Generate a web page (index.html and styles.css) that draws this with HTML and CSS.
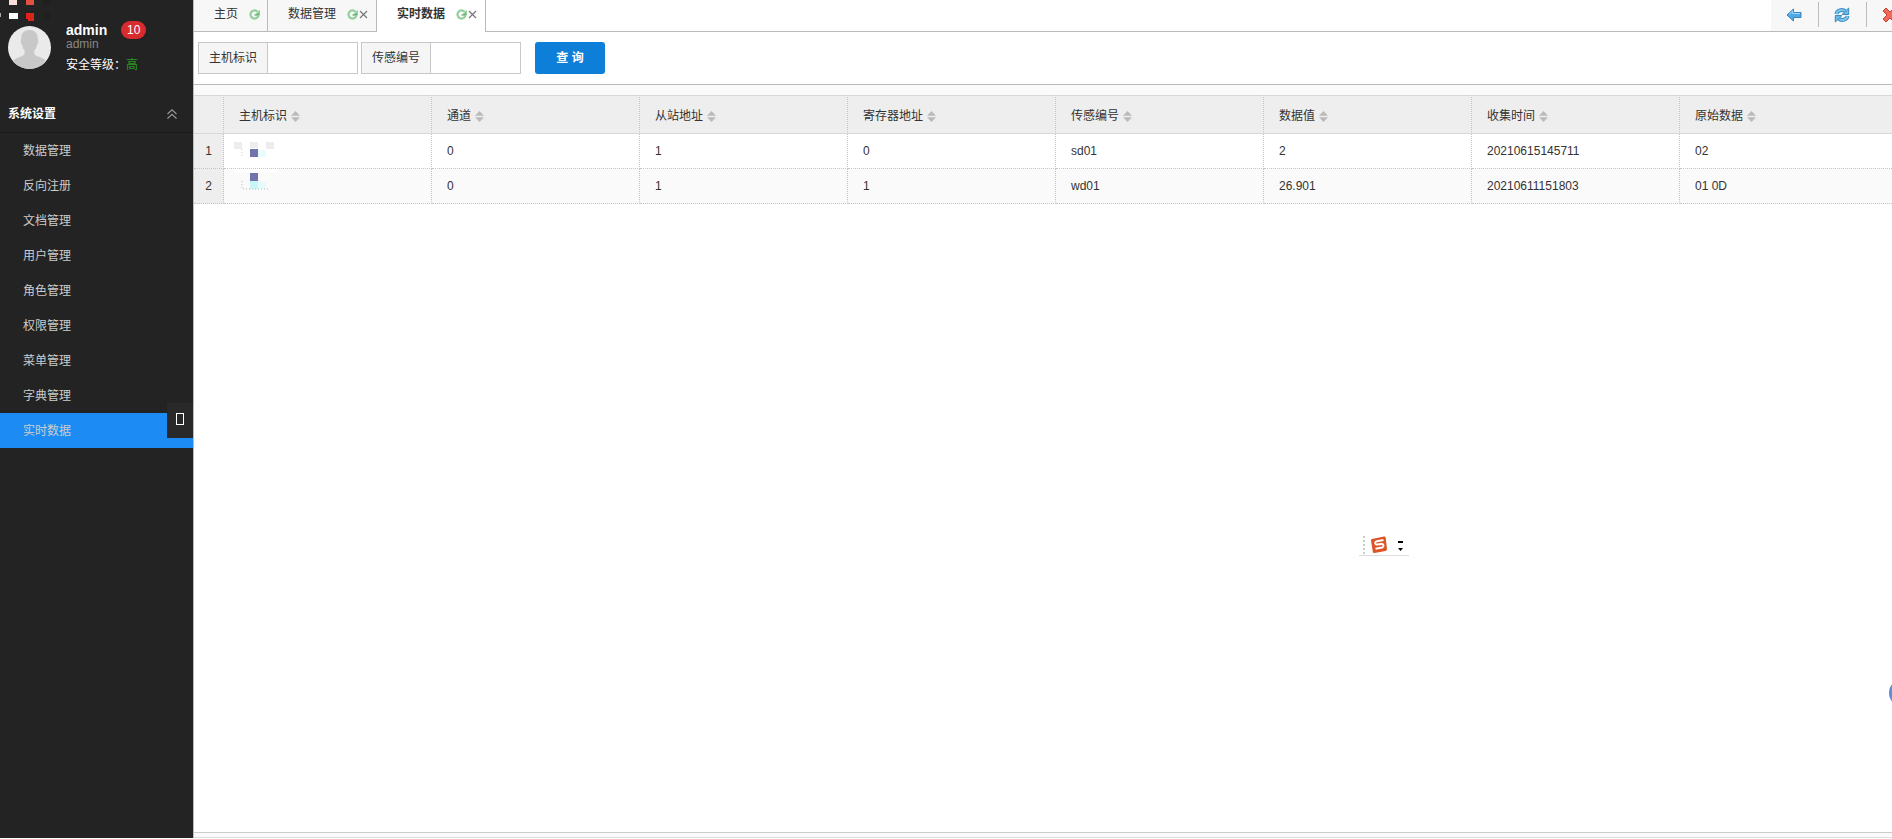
FILE: index.html
```html
<!DOCTYPE html>
<html lang="zh-CN">
<head>
<meta charset="utf-8">
<title>实时数据</title>
<link rel="stylesheet" href="styles.css">
</head>
<body>
<svg class="defs" aria-hidden="true">
  <symbol id="reload" viewBox="0 0 12 12"><path d="M9.300 3A4.400 4.400 0 1 0 10.200 7.500" fill="none" stroke="#93d09c" stroke-width="2.400"/><path d="M11.800.8v5.700H6.500z" fill="#86c990"/><path d="M6 6.500h5.500" stroke="#5fae6e" stroke-width="1.400"/></symbol>
  <symbol id="close" viewBox="0 0 9 9"><path d="M1 1l7 7M8 1L1 8" stroke="#777" stroke-width="1.2"/></symbol>
  <symbol id="sort" viewBox="0 0 10 12"><path d="M5 0l5 5.200H0zM5 12L0 6.800h10z" fill="#bbb"/></symbol>
</svg>
<div class="app">
  <aside class="sidebar">
    <svg class="mosaic" viewBox="0 0 60 22" aria-hidden="true"><path d="M0 13h1v4H0z" fill="#aaa"/><path d="M9 0h8v5H9z" fill="#f5dfdc"/><path d="M26 0h8v5h-8z" fill="#e2503f"/><path d="M9 13h9v6H9z" fill="#fff"/><path d="M26 13h8v8h-6v-2h-2z" fill="#dc241b"/><path d="M43 0h7v5h-7zM43 13h7v6h-7z" fill="#1f1f1f"/></svg>
    <div class="profile">
      <svg class="avatar" viewBox="0 0 44 44" aria-hidden="true"><defs><clipPath id="round"><circle cx="22" cy="22" r="22"/></clipPath></defs><g clip-path="url(#round)"><path d="M0 0h44v44H0z" fill="#eaeaea"/><path d="M22 4c6 0 9 4 8.500 10 1 1 .8 4-.8 5-.5 3-1.500 5-2.700 6v4c3 3 9 3 12 7l2 8H3l2-8c3-4 9-4 12-7v-4c-1.200-1-2.200-3-2.700-6-1.600-1-1.800-4-.8-5C13 8 16 4 22 4z" fill="#c8c8c8"/></g></svg>
      <div class="who">
        <div class="name"><b>admin</b><span class="count">10</span></div>
        <div class="role">admin</div>
        <div class="level">安全等级：<span>高</span></div>
      </div>
    </div>
    <button class="group"><span>系统设置</span><svg width="10" height="10" viewBox="0 0 10 10"><path d="M.5 5L5 .8 9.500 5M.5 9.500L5 5.300l4.500 4.200" fill="none" stroke="#999" stroke-width="1.100"/></svg></button>
    <nav class="menu">
      <a href="#">数据管理</a>
      <a href="#">反向注册</a>
      <a href="#">文档管理</a>
      <a href="#">用户管理</a>
      <a href="#">角色管理</a>
      <a href="#">权限管理</a>
      <a href="#">菜单管理</a>
      <a href="#">字典管理</a>
      <a href="#" class="current">实时数据</a>
    </nav>
    <button class="handle" aria-label="收起菜单"><i></i></button>
  </aside>
  <main class="main">
    <header class="tabs">
      <a href="#" class="tab home">主页<svg class="reload"><use href="#reload"/></svg></a>
      <a href="#" class="tab">数据管理<svg class="reload"><use href="#reload"/></svg><svg class="close"><use href="#close"/></svg></a>
      <a href="#" class="tab active">实时数据<svg class="reload"><use href="#reload"/></svg><svg class="close"><use href="#close"/></svg></a>
      <div class="tools">
        <button aria-label="后退"><svg width="16" height="14" viewBox="0 0 16 14"><path d="M1 7l6.500-6v3.500H15v5H7.500V13z" fill="#4fa9e2" stroke="#3484bd"/><path d="M3 6.500L6.700 3v2.500H14" fill="none" stroke="#a5d8f6"/></svg></button>
        <button aria-label="刷新"><svg width="16" height="16" viewBox="0 0 16 16"><path d="M2.500 7C3 3.500 8 1.500 11.500 4.500" fill="none" stroke="#3b8bc2" stroke-width="4"/><path d="M2.500 7C3 3.500 8 1.500 11.500 4.500" fill="none" stroke="#7cc3ee" stroke-width="2"/><path d="M14.700 1v6.500H8z" fill="#6ab8e8" stroke="#3b8bc2"/><path d="M13.500 9C13 12.500 8 14.500 4.500 11.500" fill="none" stroke="#3b8bc2" stroke-width="4"/><path d="M13.500 9C13 12.500 8 14.500 4.500 11.500" fill="none" stroke="#7cc3ee" stroke-width="2"/><path d="M1.300 15V8.500H8z" fill="#6ab8e8" stroke="#3b8bc2"/></svg></button>
        <button aria-label="关闭"><svg width="16" height="16" viewBox="0 0 16 16"><path d="M1 4l3-3 4 4 4-4 3 3-4 4 4 4-3 3-4-4-4 4-3-3 4-4z" fill="#ef6a58" stroke="#cc3b2d"/></svg></button>
      </div>
    </header>
    <form class="search">
      <div class="field"><label for="host">主机标识</label><input id="host" type="text"></div>
      <div class="field"><label for="sensor">传感编号</label><input id="sensor" type="text"></div>
      <button type="button" class="query">查 询</button>
    </form>
    <section class="content">
      <table>
        <colgroup><col class="num"><col span="7" class="data"><col></colgroup>
        <thead><tr>
          <th></th>
          <th>主机标识<svg><use href="#sort"/></svg></th>
          <th>通道<svg><use href="#sort"/></svg></th>
          <th>从站地址<svg><use href="#sort"/></svg></th>
          <th>寄存器地址<svg><use href="#sort"/></svg></th>
          <th>传感编号<svg><use href="#sort"/></svg></th>
          <th>数据值<svg><use href="#sort"/></svg></th>
          <th>收集时间<svg><use href="#sort"/></svg></th>
          <th>原始数据<svg><use href="#sort"/></svg></th>
        </tr></thead>
        <tbody>
          <tr><td>1</td><td class="masked"><svg viewBox="0 0 44 34"><path d="M0 8h8v7H0zM16 8h8v6h-8zM32 8h8v7h-8z" fill="#ededf0"/><path d="M24 16h8v7h-8z" fill="#e8fcff"/><path d="M16 15h8v8h-8z" fill="#7373ae"/><path d="M8 15v7" stroke="#ccc" stroke-dasharray="1 2"/></svg></td><td>0</td><td>1</td><td>0</td><td>sd01</td><td>2</td><td>20210615145711</td><td>02</td></tr>
          <tr><td>2</td><td class="masked"><svg viewBox="0 0 44 34"><path d="M0 0h46v4H0z" fill="#fff"/><path d="M16 4h8v8h-8z" fill="#7373ae"/><path d="M16 12h8v8h-8z" fill="#c8f7fb"/><path d="M24 13h8v7h-8z" fill="#e6fbfc"/><path d="M8 12v8h28" fill="none" stroke="#bbb" stroke-dasharray="1 2"/></svg></td><td>0</td><td>1</td><td>1</td><td>wd01</td><td>26.901</td><td>20210611151803</td><td>01 0D</td></tr>
        </tbody>
      </table>
    </section>
    <footer class="foot"></footer>
  </main>
</div>
<div class="ime"><svg width="50" height="24" viewBox="0 0 50 24" aria-hidden="true"><path d="M5 3v18" stroke="#bbb" stroke-width="1.500" stroke-dasharray="2 2"/><path d="M0 22.500h50" stroke="#ddd"/><path d="M13 6l12-2.500q1.500-.2 1.700 1.300L28 16q0 1.700-1.500 2l-11 2q-1.500.2-1.700-1.300L12 7.500q-.2-1.300 1-1.500z" fill="#dd5427"/><path d="M24.500 7l-6.500 1.200q-2 .5-1.700 2.100t2.200 1.200l3.800-.5q2-.2 2.200 1.300t-1.500 2.200l-6.500 1.300" fill="none" stroke="#fff" stroke-width="1.900"/><path d="M39 8h5v2h-5zM39 15h5l-2.500 3z" fill="#000"/></svg></div>
<div class="bubble"></div>
</body>
</html>
```
FILE: styles.css
```css
* { box-sizing: border-box; }
body {
  margin: 0;
  overflow: hidden;
  background: #fff;
  color: #333;
  font: 12px/18px "Liberation Sans", "Noto Sans CJK SC", sans-serif;
}
a { color: inherit; text-decoration: none; }
button { padding: 0; border: 0; background: none; color: inherit; font: inherit; }
svg { display: block; flex: none; }
.defs { display: none; }
.app { display: flex; height: 100vh; padding-bottom: 1px; }

.sidebar { position: relative; flex: none; width: 193px; background: #232323; color: #fff; }
.mosaic { width: 60px; height: 22px; }
.profile { display: flex; gap: 15px; padding-left: 8px; height: 72px; }
.avatar { width: 43px; height: 43px; margin-top: 4px; }
.name { display: flex; align-items: center; gap: 14px; height: 15px; font: bold 14px/14px "Liberation Sans", sans-serif; }
.count {
  width: 25px;
  padding: 1px 0;
  border-radius: 9px;
  background: #d82b30;
  font: 12px/16px "Liberation Sans", sans-serif;
  text-align: center;
}
.role { line-height: 14px; color: #888; }
.level { margin-top: 5px; }
.level span { color: #2a9b22; }
.group {
  display: flex;
  align-items: center;
  justify-content: space-between;
  width: 100%;
  height: 39px;
  padding: 2px 16px 0 8px;
  border-bottom: 1px solid #191919;
  font-weight: bold;
}
.menu a { display: block; height: 35px; padding: 1px 0 0 23px; line-height: 34px; color: #ccc; }
.menu .current { background: #1c8cf4; }
.handle {
  position: absolute;
  top: 403px;
  right: 0;
  display: flex;
  align-items: center;
  justify-content: center;
  width: 26px;
  height: 35px;
  background: #292929;
}
.handle i { width: 8px; height: 12px; margin-top: -4px; border: 1px solid #fff; }

.main { display: flex; flex: 1; flex-direction: column; min-width: 0; border-left: 1px solid #bbb; }
.tabs { display: flex; height: 32px; border-bottom: 1px solid #bbb; }
.tab {
  display: flex;
  align-items: center;
  height: 31px;
  padding: 0 8px 3px 20px;
  border-right: 1px solid #bbb;
  background: #f7f7f7;
}
.tab.home { padding-right: 7px; }
.tab.active { height: 32px; padding-bottom: 4px; background: #fff; font-weight: bold; }
.reload { width: 11px; height: 11px; margin-left: 11px; }
.close { width: 9px; height: 9px; margin-left: 1px; }
.tools { display: flex; width: 121px; margin-left: auto; overflow: hidden; background: #f7f7f7; }
.tools button {
  display: flex;
  flex: none;
  align-items: center;
  justify-content: center;
  width: 48px;
  height: 25px;
  margin-top: 2px;
  padding-right: 2px;
  border-right: 1px solid #bbb;
}
.search { display: flex; gap: 3px; padding: 10px 4px; border-bottom: 1px solid #bbb; }
.field { display: flex; width: 160px; height: 32px; border: 1px solid #c8c8c8; }
.field label { width: 69px; background: #f5f5f5; border-right: 1px solid #c8c8c8; line-height: 30px; text-align: center; }
.field input { flex: 1; min-width: 0; border: 0; outline: 0; background: #fff; font: inherit; }
.query { width: 70px; height: 32px; margin-left: 11px; border-radius: 3px; background: #0e7fd8; color: #fff; font-weight: bold; }

.content { flex: 1; min-height: 0; overflow: hidden; padding-top: 10px; background: linear-gradient(#fafafa 10px, #fff 10px); }
table { width: 100%; border-collapse: separate; border-spacing: 0; table-layout: fixed; }
.num { width: 30px; }
.data { width: 208px; }
th, td { padding: 0 0 0 15px; border-right: 1px dotted #c4c4c4; text-align: left; font-weight: normal; }
th { height: 39px; padding-top: 2px; border-top: 1px solid #d8d8d8; border-bottom: 1px solid #d8d8d8; background: #eee; }
th svg { display: inline-block; width: 9px; height: 11px; margin-left: 4px; vertical-align: -2px; }
td { height: 35px; border-bottom: 1px dotted #c4c4c4; }
td:first-child { padding: 0; background: #eee; text-align: center; }
th:last-child, td:last-child { border-right: 0; }
tbody tr:nth-child(2) { background: #fafafa; }
.masked { padding-left: 10px; }
.masked svg { width: 44px; height: 34px; }
.foot { height: 6px; border-top: 1px solid #ccc; border-bottom: 1px solid #ddd; background: #fafafa; }

.ime { position: fixed; left: 1359px; top: 533px; }
.bubble { position: fixed; right: -25px; top: 679px; width: 28px; height: 28px; border-radius: 50%; background: #5b8edb; }
```
